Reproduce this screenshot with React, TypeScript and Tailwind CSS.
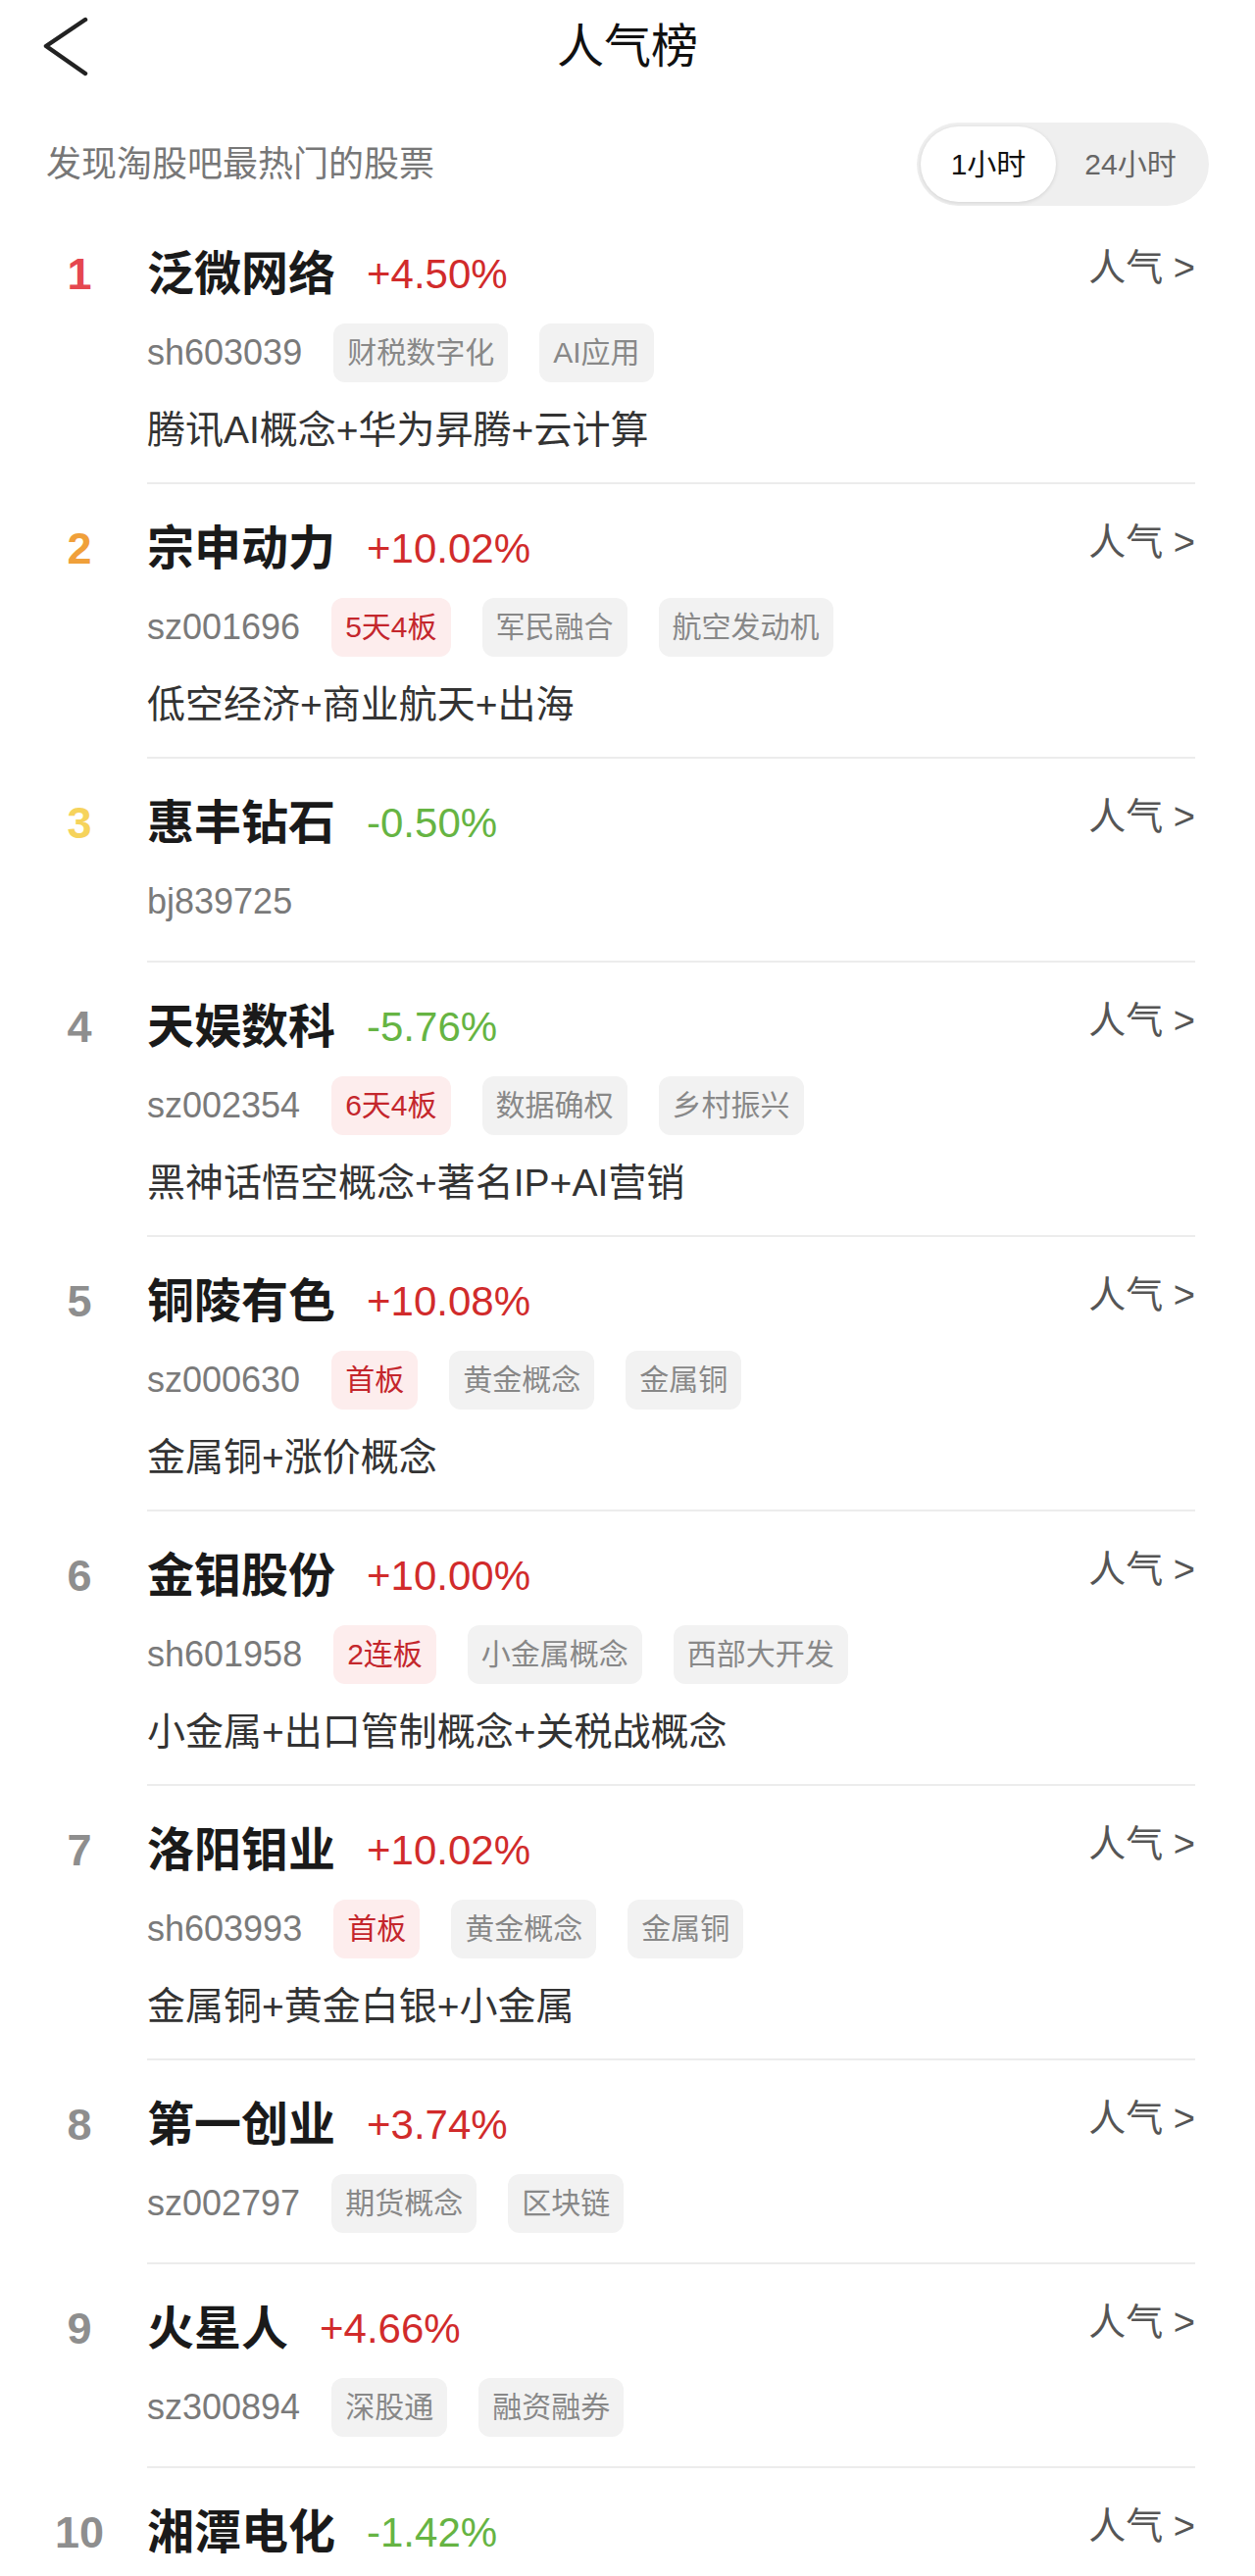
import React from "react";

type Tag = { label: string; hot?: boolean };
type Stock = {
  rank: number;
  name: string;
  change: string;
  code: string;
  tags: Tag[];
  desc?: string;
};

const FONT = { fontFamily: '"Liberation Sans", "Noto Sans CJK SC", sans-serif' };

const stocks: Stock[] = [
  {
    rank: 1,
    name: "泛微网络",
    change: "+4.50%",
    code: "sh603039",
    tags: [{ label: "财税数字化" }, { label: "AI应用" }],
    desc: "腾讯AI概念+华为昇腾+云计算",
  },
  {
    rank: 2,
    name: "宗申动力",
    change: "+10.02%",
    code: "sz001696",
    tags: [{ label: "5天4板", hot: true }, { label: "军民融合" }, { label: "航空发动机" }],
    desc: "低空经济+商业航天+出海",
  },
  { rank: 3, name: "惠丰钻石", change: "-0.50%", code: "bj839725", tags: [] },
  {
    rank: 4,
    name: "天娱数科",
    change: "-5.76%",
    code: "sz002354",
    tags: [{ label: "6天4板", hot: true }, { label: "数据确权" }, { label: "乡村振兴" }],
    desc: "黑神话悟空概念+著名IP+AI营销",
  },
  {
    rank: 5,
    name: "铜陵有色",
    change: "+10.08%",
    code: "sz000630",
    tags: [{ label: "首板", hot: true }, { label: "黄金概念" }, { label: "金属铜" }],
    desc: "金属铜+涨价概念",
  },
  {
    rank: 6,
    name: "金钼股份",
    change: "+10.00%",
    code: "sh601958",
    tags: [{ label: "2连板", hot: true }, { label: "小金属概念" }, { label: "西部大开发" }],
    desc: "小金属+出口管制概念+关税战概念",
  },
  {
    rank: 7,
    name: "洛阳钼业",
    change: "+10.02%",
    code: "sh603993",
    tags: [{ label: "首板", hot: true }, { label: "黄金概念" }, { label: "金属铜" }],
    desc: "金属铜+黄金白银+小金属",
  },
  {
    rank: 8,
    name: "第一创业",
    change: "+3.74%",
    code: "sz002797",
    tags: [{ label: "期货概念" }, { label: "区块链" }],
  },
  {
    rank: 9,
    name: "火星人",
    change: "+4.66%",
    code: "sz300894",
    tags: [{ label: "深股通" }, { label: "融资融券" }],
  },
  { rank: 10, name: "湘潭电化", change: "-1.42%", code: "", tags: [] },
];

const rankColor = (rank: number) => {
  if (rank === 1) return "text-[#e5474f]";
  if (rank === 2) return "text-[#f0a03a]";
  if (rank === 3) return "text-[#f6d35c]";
  return "text-[#8e8e8e]";
};

function Row({ s }: { s: Stock }) {
  const up = s.change.startsWith("+");
  return (
    <div className="flex">
      {/* rank */}
      <div className="w-[150px] shrink-0 pl-[55px] pt-[38px]">
        <div
          className={`w-[52px] h-[56px] flex items-center justify-center text-[45px] font-bold ${rankColor(s.rank)}`}
        >
          {s.rank}
        </div>
      </div>

      <div className="flex-1 mr-[61px] border-b-2 border-[#ececec] pt-[38px] pb-[30px]">
        <div className="flex justify-between">
          <div className="flex items-center h-[56px] gap-[32px]">
            <span className="text-[48px] font-bold text-[#1a1a1a] leading-none">{s.name}</span>
            <span className={`text-[42px] leading-none ${up ? "text-[#d12b2b]" : "text-[#66b443]"}`}>
              {s.change}
            </span>
          </div>
          <div className="h-[42px] flex items-center text-[38px] text-[#555] leading-none">
            人气 &gt;
          </div>
        </div>

        {s.code && (
          <div className="flex items-center h-[60px] mt-[22px] gap-[32px]">
            <span className="text-[36px] text-[#7a7a7a] leading-none">{s.code}</span>
            {s.tags.map((t) => (
              <span
                key={t.label}
                className={`h-[60px] px-[14px] rounded-[12px] flex items-center text-[30px] leading-none ${
                  t.hot ? "bg-[#fdeded] text-[#c4262c]" : "bg-[#f2f2f2] text-[#888]"
                }`}
              >
                {t.label}
              </span>
            ))}
          </div>
        )}

        {s.desc && (
          <div className="h-[48px] mt-[24px] flex items-center text-[39px] text-[#333] leading-none">
            {s.desc}
          </div>
        )}
      </div>
    </div>
  );
}

export default function App() {
  return (
    <div className="w-[1280px] h-[2628px] overflow-hidden bg-white" style={FONT}>
      {/* top bar */}
      <div className="grid grid-cols-[1fr_auto_1fr] items-center h-[96px]">
        <div className="pl-[44px]">
          <svg width="48" height="64" viewBox="0 0 48 64" fill="none">
            <path
              d="M43 4 L3 31 L43 59"
              stroke="#222"
              strokeWidth="4.5"
              strokeLinecap="round"
              strokeLinejoin="round"
            />
          </svg>
        </div>
        <h1 className="text-[48px] text-[#111] leading-none">人气榜</h1>
        <div />
      </div>

      {/* subtitle + toggle */}
      <div className="flex items-center justify-between pl-[47px] pr-[47px] pt-[29px] pb-[4px]">
        <p className="text-[36px] text-[#777] leading-none">发现淘股吧最热门的股票</p>
        <div className="flex h-[85px] w-[298px] rounded-full bg-[#efefef] p-[4px]">
          <button className="w-[138px] h-full rounded-full bg-white shadow-[0_1px_4px_rgba(0,0,0,0.12)] text-[30px] text-[#111] leading-none">
            1小时
          </button>
          <button className="flex-1 h-full text-[30px] text-[#666] leading-none">24小时</button>
        </div>
      </div>

      <div>
        {stocks.map((s) => (
          <Row key={s.rank} s={s} />
        ))}
      </div>
    </div>
  );
}
